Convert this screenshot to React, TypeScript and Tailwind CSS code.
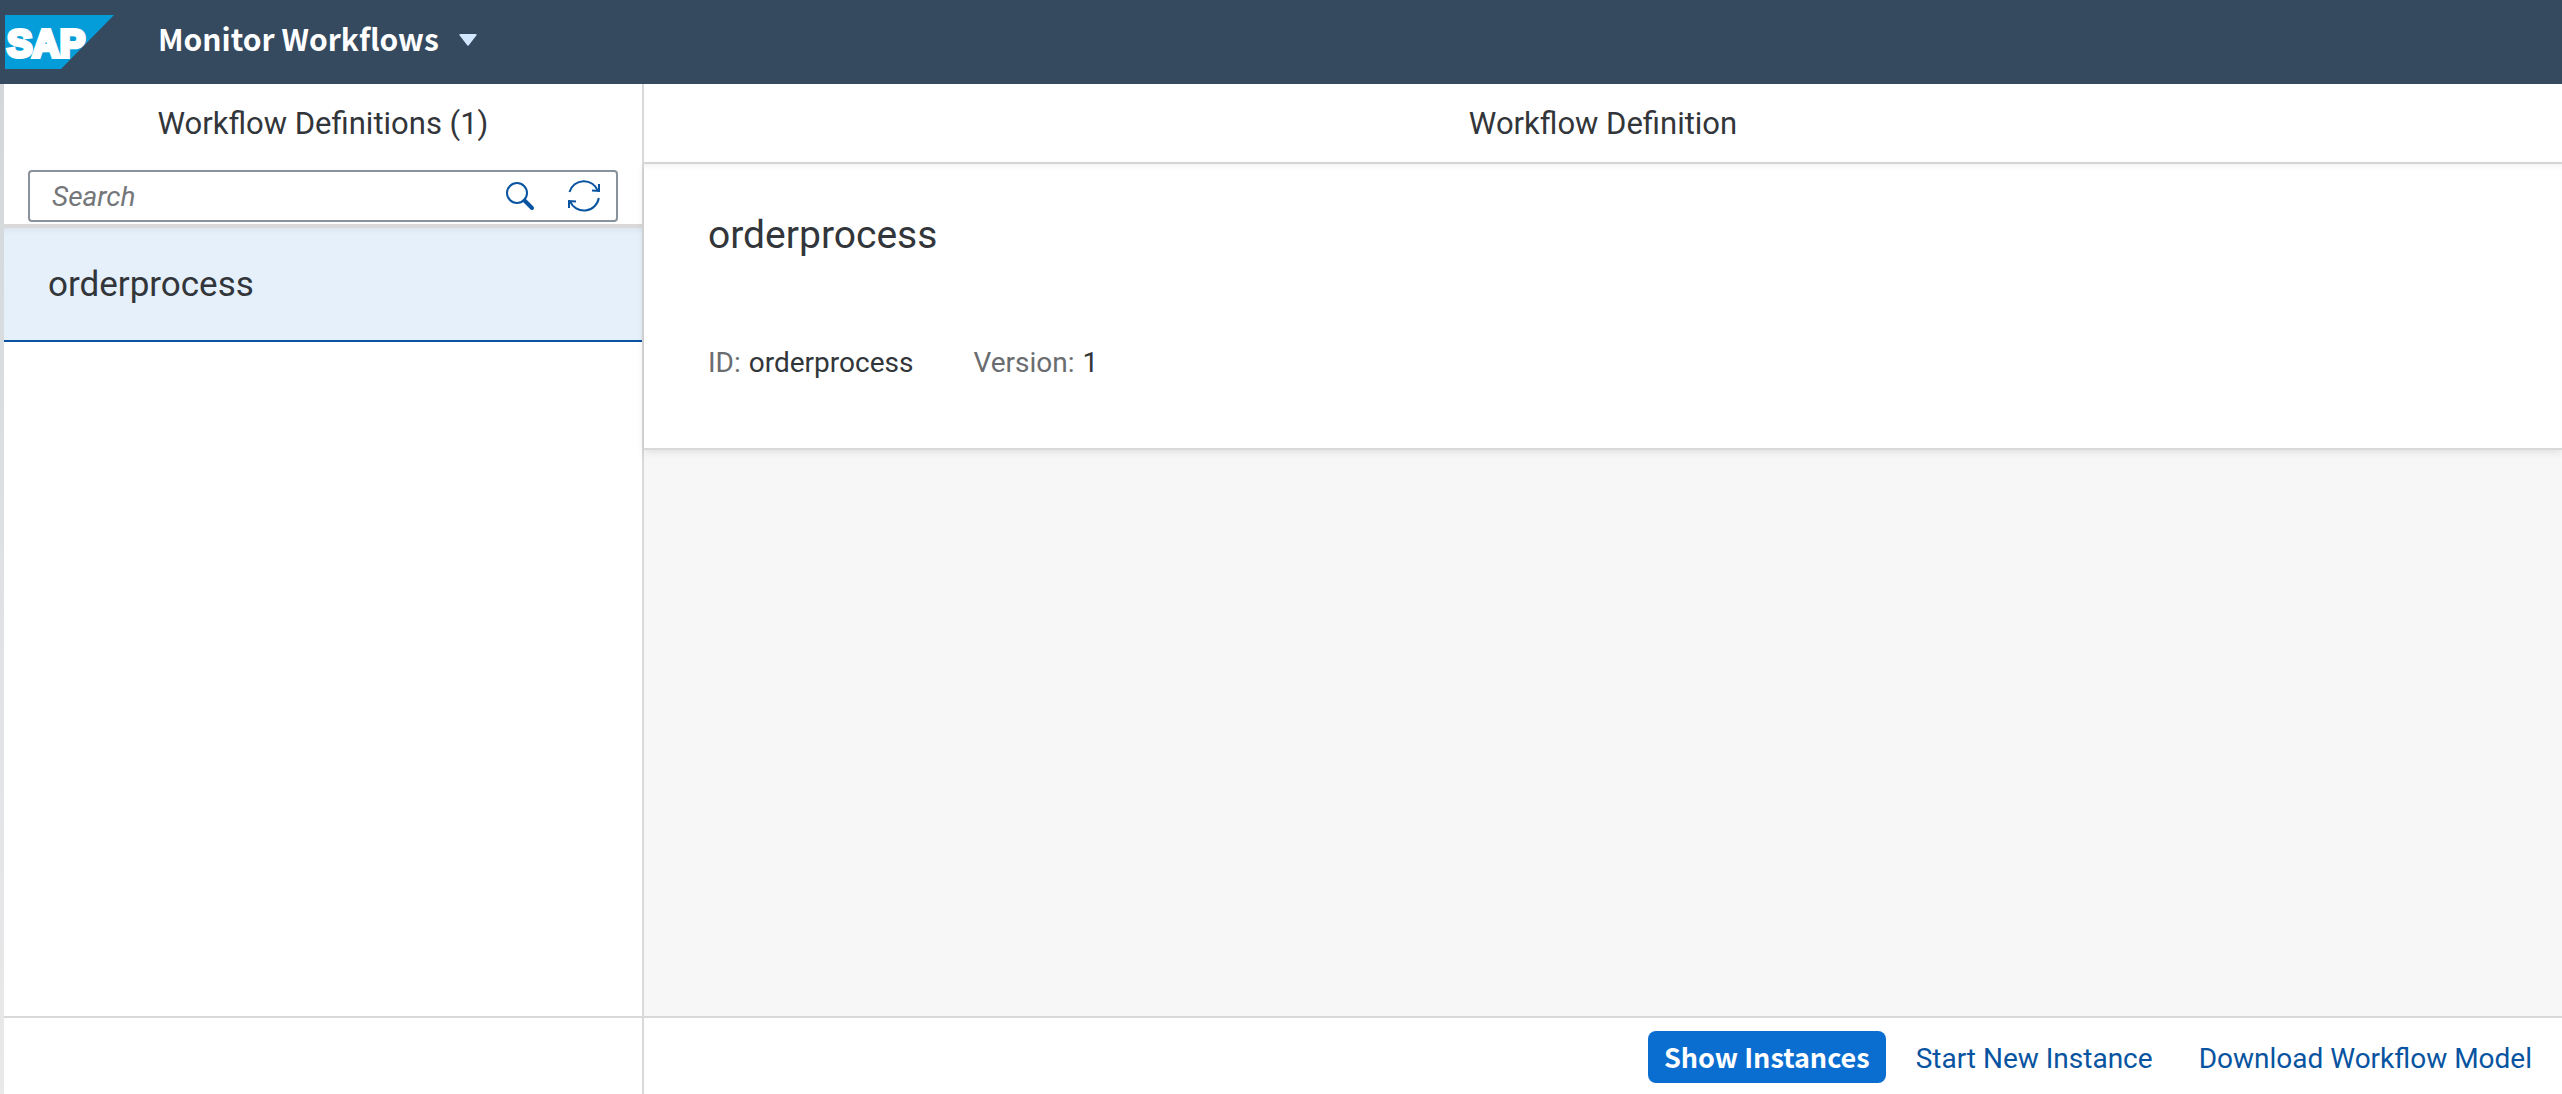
function SapLogo() {
  return (
    <svg viewBox="0 0 110 54" className="h-[54px] w-[110px]" role="img" aria-label="SAP">
      <path d="M1 0H110L57 54H1Z" fill="#049dda" />
      <text
        x="3"
        y="42"
        fill="#fff"
        stroke="#fff"
        strokeWidth="4"
        fontFamily="'Liberation Sans', Arial, sans-serif"
        fontWeight="700"
        fontSize="38"
      >
        SAP
      </text>
    </svg>
  );
}

function SearchIcon() {
  return (
    <svg viewBox="0 0 32 32" className="size-8" fill="none" stroke="#0854a0" aria-hidden="true">
      <circle cx="13" cy="13" r="10" strokeWidth="2" />
      <path d="M20.5 20.5L28 28" strokeWidth="4" strokeLinecap="round" />
    </svg>
  );
}

function RefreshIcon() {
  return (
    <svg viewBox="0 0 32 32" className="size-8" fill="none" stroke="#0854a0" strokeWidth="2" aria-hidden="true">
      <path d="M1.5 12A15 15 0 0 1 30 11" />
      <path d="M31 4V11L24 10.5" />
      <path d="M30.8 18A15 15 0 0 1 2 21" />
      <path d="M1 28V21L8 21.5" />
    </svg>
  );
}

const textButton = "h-[52px] rounded-lg px-4 pt-1 text-[28px] leading-8 text-[#0854a0]";

export default function App() {
  return (
    <div className="flex min-h-screen flex-col bg-white font-[Roboto,sans-serif] text-[#32363a]">
      <header className="flex h-[84px] items-center bg-[#354a5f] pl-1">
        <SapLogo />
        <button className="ml-11 flex items-center gap-5 pb-2 font-['Noto_Sans_CJK_SC',sans-serif] text-[30px] leading-10 font-bold text-white">
          Monitor Workflows
          <svg viewBox="0 0 18 12" className="mt-1 h-3 w-[18px]" fill="#d1e8ff" aria-hidden="true">
            <path d="M1.5 0H16.5Q18.5 0 17.3 1.6L10 11Q9 12.4 8 11L0.7 1.6Q-0.5 0 1.5 0Z" />
          </svg>
        </button>
      </header>

      <div className="flex flex-1">
        <div className="w-1 bg-linear-to-b from-[#d3d7d9] via-[#dfe1e5] to-[#e9e9e9]" />

        <aside className="flex w-[640px] shrink-0 flex-col border-r-2 border-[#d9d9d9]">
          <div className="border-b-4 border-[#d9d9d9] px-6 pb-0.5">
            <h2 className="py-5 text-center text-[31px] leading-10">Workflow Definitions (1)</h2>
            <form
              role="search"
              className="mt-1.5 flex h-[52px] items-center rounded-sm border-2 border-[#89919a] pr-4"
              onSubmit={(e) => e.preventDefault()}
            >
              <input
                type="search"
                aria-label="Search"
                placeholder="Search"
                className="min-w-0 flex-1 pt-0.5 pl-[22px] text-[28px] leading-8 outline-none placeholder:text-[#74777a] placeholder:italic"
              />
              <button type="submit" aria-label="Search">
                <SearchIcon />
              </button>
              <button type="button" aria-label="Refresh" className="ml-8">
                <RefreshIcon />
              </button>
            </form>
          </div>
          <ul className="flex-1">
            <li>
              <button className="flex h-[114px] w-full items-center border-b-2 border-[#0854a0] bg-[#e5f0fa] px-11 pt-0.5 text-[35px] leading-10 shadow-[inset_0_6px_6px_-4px_#0000000f]">
                orderprocess
              </button>
            </li>
          </ul>
          <div className="h-[78px] border-t-2 border-[#d9d9d9]" />
        </aside>

        <main className="flex min-w-0 flex-1 flex-col bg-[#f7f7f7]">
          <h2 className="border-b-2 border-[#d9d9d9] bg-white pt-5 pb-[18px] text-center text-[31px] leading-10">
            Workflow Definition
          </h2>
          <section className="h-[286px] border-b-2 border-[#d9d9d9] bg-white px-16 pt-[45px] shadow-[inset_0_6px_6px_-4px_#0000000f,0_2px_8px_#0000001a]">
            <h1 className="text-[39px] leading-[52px]">orderprocess</h1>
            <dl className="mt-[86px] flex gap-[60px] text-[28px] leading-8">
              <div className="flex gap-2">
                <dt className="text-[#6a6d70]">ID:</dt>
                <dd>orderprocess</dd>
              </div>
              <div className="flex gap-2">
                <dt className="text-[#6a6d70]">Version:</dt>
                <dd>1</dd>
              </div>
            </dl>
          </section>
          <div className="flex-1" />
          <footer className="flex h-[78px] items-center justify-end gap-3.5 border-t-2 border-[#d9d9d9] bg-white pt-0.5 pr-3.5">
            <button className="h-[52px] rounded-lg bg-[#0a6ed1] px-4 font-['Noto_Sans_CJK_SC',sans-serif] text-[27px] leading-8 font-bold text-white">
              Show Instances
            </button>
            <button className={textButton}>Start New Instance</button>
            <button className={textButton}>Download Workflow Model</button>
          </footer>
        </main>
      </div>
    </div>
  );
}
